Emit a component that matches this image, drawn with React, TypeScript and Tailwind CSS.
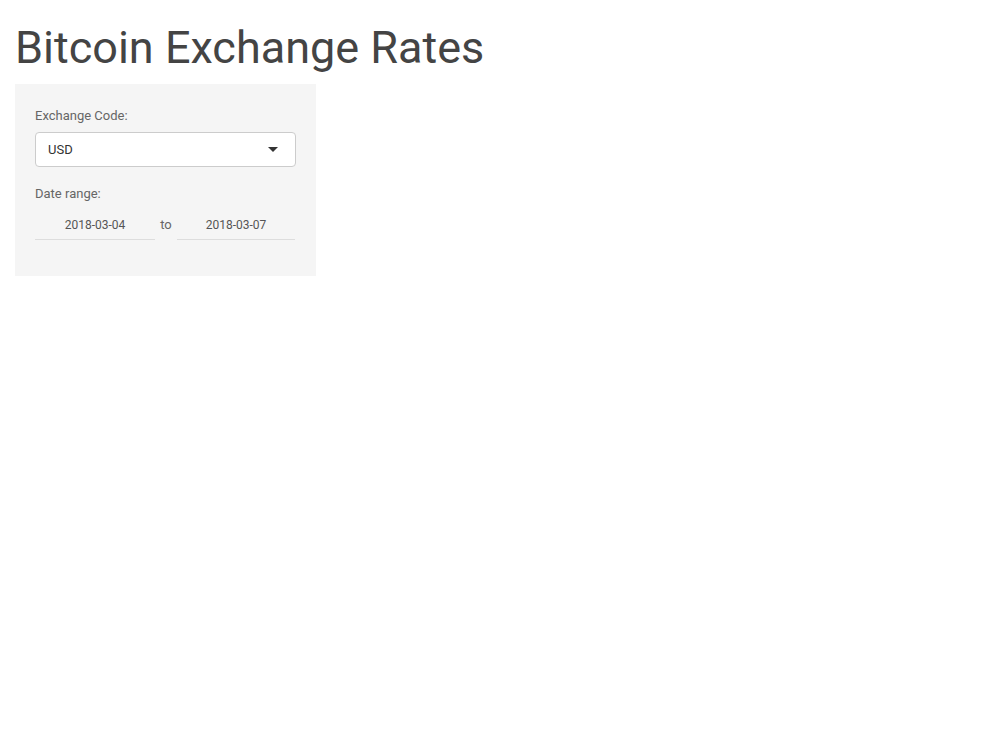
export default function App() {
  return (
    <div className="min-h-screen bg-white px-[15px] font-['Roboto',sans-serif] text-[#444]">
      <h1 className="pt-[20px] pb-[8px] text-[45px] leading-[56px] font-normal">Bitcoin Exchange Rates</h1>
      <div className="w-[301px] bg-[#f5f5f5] px-5 pt-[21px] pb-[36px]">
        <div className="text-[13px] leading-[22px] text-[#666]">Exchange Code:</div>
        <div className="mt-[5px] flex h-[35px] items-center justify-between rounded-[4px] border border-[#ccc] bg-white pl-3 pr-[17px]">
          <span className="text-[13px] text-[#333]">USD</span>
          <span className="h-0 w-0 border-x-[5px] border-t-[5px] border-x-transparent border-t-[#333]" />
        </div>
        <div className="mt-[16px] text-[13px] leading-[22px] text-[#666]">Date range:</div>
        <div className="mt-[11px] flex items-start">
          <div className="w-[120px] border-b border-[#ddd] pb-[5px] text-center text-[12px] leading-[18px] text-[#555]">2018-03-04</div>
          <span className="w-[22px] text-center text-[13px] leading-[18px] text-[#666]">to</span>
          <div className="w-[118px] border-b border-[#ddd] pb-[5px] text-center text-[12px] leading-[18px] text-[#555]">2018-03-07</div>
        </div>
      </div>
    </div>
  );
}
